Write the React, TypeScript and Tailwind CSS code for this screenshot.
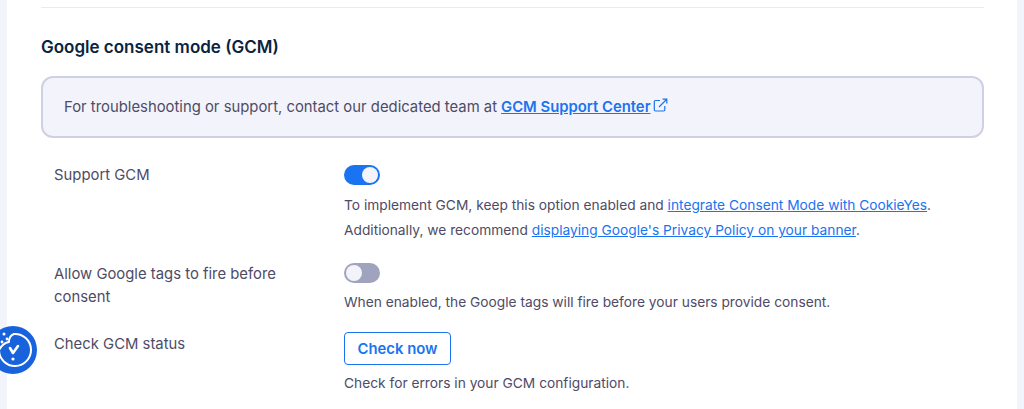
export default function App() {
  return (
    <div className="relative h-[409px] w-[1024px] overflow-hidden bg-[#f3f4fb] px-[7px] font-['Inter',sans-serif] text-[#4e4b66]">
      <div className="h-full bg-white pl-[34px] pr-[33px] pt-[7px]">
        <div className="h-px bg-[#e9ebf0]" />
        <h2 className="mt-[29px] text-[17px] font-semibold leading-[20px] text-[#0b2340]">Google consent mode (GCM)</h2>
        <div className="mt-[19px] flex h-[62px] items-center rounded-[12px] border-2 border-[#d0d0e4] bg-[#f3f4fb] pl-[21px] text-[14.85px]">
          <span>For troubleshooting or support, contact our dedicated team at</span>
          <a className="ml-[4px] flex items-center font-semibold text-[#1a73f0]">
            <span className="underline">GCM Support Center</span>
            <svg className="ml-[2px] mb-[2px]" width="15" height="15" viewBox="0 0 15 15" fill="none" stroke="#1a73f0" strokeWidth="1.2">
              <path d="M7 2.5H2.5a1.2 1.2 0 0 0-1.2 1.2v8.1a1.2 1.2 0 0 0 1.2 1.2h8.1a1.2 1.2 0 0 0 1.2-1.2V8" />
              <path d="M6 9 13.5 1.5M9.5 1.2h4.3v4.3" />
            </svg>
          </a>
        </div>
        <div className="mt-[27px] flex pl-[13px]">
          <div className="-mt-[1px] w-[290px] text-[14.85px] leading-[23px]">Support GCM</div>
          <div>
            <div className="flex h-[20px] w-[36px] items-center justify-end rounded-full bg-[#1a73f0] pr-[2px]">
              <div className="h-[16px] w-[16px] rounded-full bg-[#f3f4fb]" />
            </div>
            <p className="mt-[8px] text-[13.75px] leading-[25px]">
              To implement GCM, keep this option enabled and <a className="text-[#1a73f0] underline">integrate Consent Mode with CookieYes</a>.<br />
              Additionally, we recommend <a className="text-[#1a73f0] underline">displaying Google's Privacy Policy on your banner</a>.
            </p>
          </div>
        </div>
        <div className="mt-[20px] flex pl-[13px]">
          <div className="w-[290px] text-[14.85px] leading-[23px]">Allow Google tags to fire before<br />consent</div>
          <div>
            <div className="flex h-[20px] w-[36px] items-center rounded-full bg-[#a0a3bd] pl-[2px]">
              <div className="h-[16px] w-[16px] rounded-full bg-[#f3f4fb]" />
            </div>
            <p className="mt-[9px] text-[13.75px] leading-[20px]">When enabled, the Google tags will fire before your users provide consent.</p>
          </div>
        </div>
        <div className="mt-[20px] flex pl-[13px]">
          <div className="w-[290px] pt-[1px] text-[14.85px] leading-[23px]">Check GCM status</div>
          <div>
            <button className="h-[33px] w-[107px] rounded-[4px] border border-[#1a73f0] bg-white pt-[1px] text-[14.85px] font-semibold text-[#1a73f0]">Check now</button>
            <p className="mt-[8px] text-[13.75px] leading-[20px]">Check for errors in your GCM configuration.</p>
          </div>
        </div>
      </div>
      <div className="absolute left-[-11px] top-[326px] h-[48px] w-[48px] rounded-full bg-[#1863dc]">
        <svg width="48" height="48" viewBox="0 0 48 48" fill="none" stroke="white" strokeWidth="2" strokeLinecap="round" strokeLinejoin="round">
          <path d="M25 8A16 16 0 1 1 10 24" />
          <path d="M25 8c-3 1-5 4-5 8-4 .5-7 2.500-10 8" />
          <path d="m21 22 3 5 5-7" strokeWidth="2.600" />
          <circle cx="24" cy="33" r="1.600" fill="white" stroke="none" />
          <circle cx="15" cy="8" r="1.500" fill="white" stroke="none" />
          <circle cx="18" cy="13" r="1.400" fill="white" stroke="none" />
          <circle cx="13" cy="16" r="1.400" fill="white" stroke="none" />
        </svg>
      </div>
    </div>
  );
}
